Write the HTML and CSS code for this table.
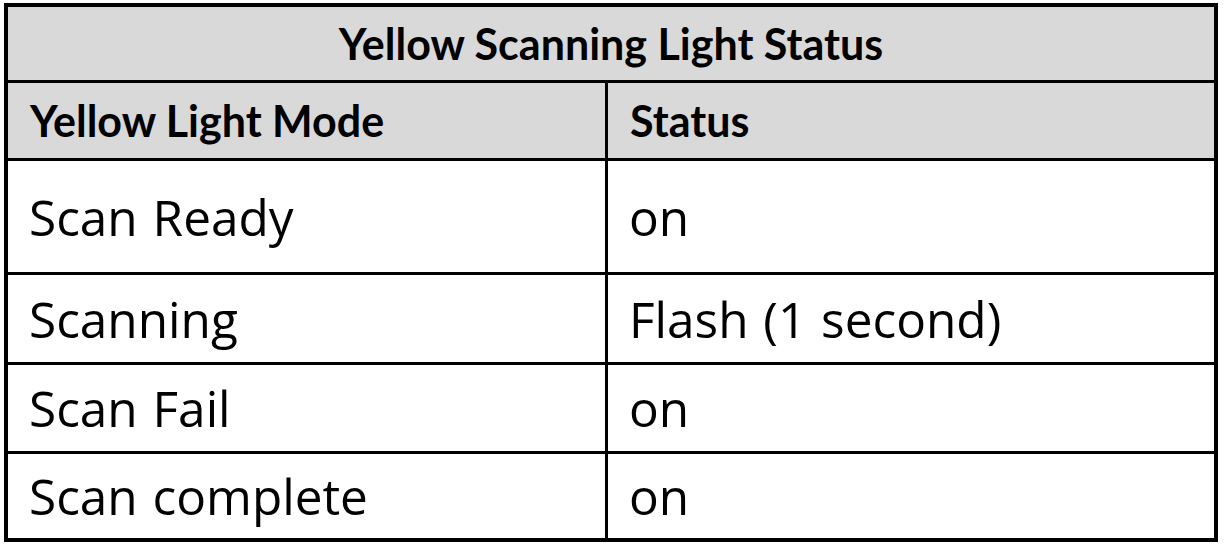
FILE: index.html
```html
<!DOCTYPE html>
<html lang="en">
<head>
<meta charset="utf-8">
<title>Yellow Scanning Light Status</title>
<link rel="stylesheet" href="styles.css">
</head>
<body>
<div class="status-table">
  <div class="cell head title">Yellow Scanning Light Status</div>
  <div class="cell head">Yellow Light Mode</div>
  <div class="cell head">Status</div>
  <div class="cell">Scan Ready</div>
  <div class="cell">on</div>
  <div class="cell">Scanning</div>
  <div class="cell">Flash (1 second)</div>
  <div class="cell">Scan Fail</div>
  <div class="cell">on</div>
  <div class="cell">Scan complete</div>
  <div class="cell">on</div>
</div>
</body>
</html>
```
FILE: styles.css
```css
html, body {
  margin: 0;
  padding: 0;
  background: #ffffff;
}

.status-table {
  margin: 3px 0 0 4px;
  width: 1214px;
  box-sizing: border-box;
  border: 4px solid #000000;
  background: #000000;
  display: grid;
  grid-template-columns: 597px 606px;
  grid-template-rows: 73px 75px 111px 87px 86px 84px;
  column-gap: 3px;
  row-gap: 3px;
}

.cell {
  background: #ffffff;
  color: #000000;
  font-family: "Open Sans", "Noto Sans", sans-serif;
  font-size: 49.5px;
  word-spacing: 2px;
  display: flex;
  align-items: center;
  padding-left: 21px;
  white-space: nowrap;
}

.head {
  background: #d9d9d9;
  font-family: "Lato", "Open Sans", sans-serif;
  font-weight: 700;
  font-size: 43px;
  word-spacing: 0;
  padding-left: 22px;
}

.title {
  grid-column: 1 / 3;
  justify-content: center;
  padding-left: 0;
}
```
